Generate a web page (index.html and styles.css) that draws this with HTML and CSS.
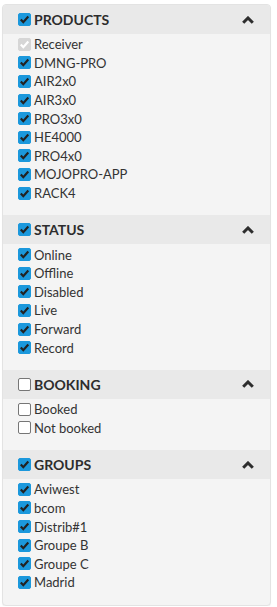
FILE: index.html
```html
<!DOCTYPE html>
<html lang="en">
<head>
    <meta charset="UTF-8">
    <meta name="viewport" content="width=device-width, initial-scale=1.0">
    <title>Filters</title>
    <link rel="stylesheet" href="styles.css">
</head>
<body>
    <div class="filter-panel">

        <div class="filter-section">
            <div class="section-header">
                <span class="box checked"><svg viewBox="0 0 13 13"><path d="M2.8 6.6 L5.3 9.2 L10.3 3.6" /></svg></span>
                <span class="section-title">PRODUCTS</span>
                <svg class="chevron" viewBox="0 0 12 8"><path d="M1.2 6.8 L6 2 L10.8 6.8" /></svg>
            </div>
            <ul class="option-list">
                <li><span class="box disabled"><svg viewBox="0 0 13 13"><path d="M2.8 6.6 L5.3 9.2 L10.3 3.6" /></svg></span>Receiver</li>
                <li><span class="box checked"><svg viewBox="0 0 13 13"><path d="M2.8 6.6 L5.3 9.2 L10.3 3.6" /></svg></span>DMNG-PRO</li>
                <li><span class="box checked"><svg viewBox="0 0 13 13"><path d="M2.8 6.6 L5.3 9.2 L10.3 3.6" /></svg></span>AIR2x0</li>
                <li><span class="box checked"><svg viewBox="0 0 13 13"><path d="M2.8 6.6 L5.3 9.2 L10.3 3.6" /></svg></span>AIR3x0</li>
                <li><span class="box checked"><svg viewBox="0 0 13 13"><path d="M2.8 6.6 L5.3 9.2 L10.3 3.6" /></svg></span>PRO3x0</li>
                <li><span class="box checked"><svg viewBox="0 0 13 13"><path d="M2.8 6.6 L5.3 9.2 L10.3 3.6" /></svg></span>HE4000</li>
                <li><span class="box checked"><svg viewBox="0 0 13 13"><path d="M2.8 6.6 L5.3 9.2 L10.3 3.6" /></svg></span>PRO4x0</li>
                <li><span class="box checked"><svg viewBox="0 0 13 13"><path d="M2.8 6.6 L5.3 9.2 L10.3 3.6" /></svg></span>MOJOPRO-APP</li>
                <li><span class="box checked"><svg viewBox="0 0 13 13"><path d="M2.8 6.6 L5.3 9.2 L10.3 3.6" /></svg></span>RACK4</li>
            </ul>
        </div>

        <div class="filter-section">
            <div class="section-header">
                <span class="box checked"><svg viewBox="0 0 13 13"><path d="M2.8 6.6 L5.3 9.2 L10.3 3.6" /></svg></span>
                <span class="section-title">STATUS</span>
                <svg class="chevron" viewBox="0 0 12 8"><path d="M1.2 6.8 L6 2 L10.8 6.8" /></svg>
            </div>
            <ul class="option-list">
                <li><span class="box checked"><svg viewBox="0 0 13 13"><path d="M2.8 6.6 L5.3 9.2 L10.3 3.6" /></svg></span>Online</li>
                <li><span class="box checked"><svg viewBox="0 0 13 13"><path d="M2.8 6.6 L5.3 9.2 L10.3 3.6" /></svg></span>Offline</li>
                <li><span class="box checked"><svg viewBox="0 0 13 13"><path d="M2.8 6.6 L5.3 9.2 L10.3 3.6" /></svg></span>Disabled</li>
                <li><span class="box checked"><svg viewBox="0 0 13 13"><path d="M2.8 6.6 L5.3 9.2 L10.3 3.6" /></svg></span>Live</li>
                <li><span class="box checked"><svg viewBox="0 0 13 13"><path d="M2.8 6.6 L5.3 9.2 L10.3 3.6" /></svg></span>Forward</li>
                <li><span class="box checked"><svg viewBox="0 0 13 13"><path d="M2.8 6.6 L5.3 9.2 L10.3 3.6" /></svg></span>Record</li>
            </ul>
        </div>

        <div class="filter-section">
            <div class="section-header">
                <span class="box"></span>
                <span class="section-title">BOOKING</span>
                <svg class="chevron" viewBox="0 0 12 8"><path d="M1.2 6.8 L6 2 L10.8 6.8" /></svg>
            </div>
            <ul class="option-list">
                <li><span class="box"></span>Booked</li>
                <li><span class="box"></span>Not booked</li>
            </ul>
        </div>

        <div class="filter-section">
            <div class="section-header">
                <span class="box checked"><svg viewBox="0 0 13 13"><path d="M2.8 6.6 L5.3 9.2 L10.3 3.6" /></svg></span>
                <span class="section-title">GROUPS</span>
                <svg class="chevron" viewBox="0 0 12 8"><path d="M1.2 6.8 L6 2 L10.8 6.8" /></svg>
            </div>
            <ul class="option-list">
                <li><span class="box checked"><svg viewBox="0 0 13 13"><path d="M2.8 6.6 L5.3 9.2 L10.3 3.6" /></svg></span>Aviwest</li>
                <li><span class="box checked"><svg viewBox="0 0 13 13"><path d="M2.8 6.6 L5.3 9.2 L10.3 3.6" /></svg></span>bcom</li>
                <li><span class="box checked"><svg viewBox="0 0 13 13"><path d="M2.8 6.6 L5.3 9.2 L10.3 3.6" /></svg></span>Distrib#1</li>
                <li><span class="box checked"><svg viewBox="0 0 13 13"><path d="M2.8 6.6 L5.3 9.2 L10.3 3.6" /></svg></span>Groupe B</li>
                <li><span class="box checked"><svg viewBox="0 0 13 13"><path d="M2.8 6.6 L5.3 9.2 L10.3 3.6" /></svg></span>Groupe C</li>
                <li><span class="box checked"><svg viewBox="0 0 13 13"><path d="M2.8 6.6 L5.3 9.2 L10.3 3.6" /></svg></span>Madrid</li>
            </ul>
        </div>

    </div>
</body>
</html>
```

FILE: styles.css
```css
html, body {
    margin: 0;
    background-color: #ffffff;
    font-family: Lato, "Liberation Sans", sans-serif;
    color: #333333;
}

.filter-panel {
    margin: 4px 6px 0 2px;
    background-color: #f4f4f4;
    border: 1px solid #e3e3e3;
    border-radius: 4px;
    box-shadow: 0 1px 1px rgba(0, 0, 0, 0.06);
    overflow: hidden;
}

.filter-section {
    padding-bottom: 13px;
}

.section-header {
    display: flex;
    align-items: center;
    height: 29px;
    padding: 0 15px 0 15px;
    background-color: #e9e9e9;
}

.section-title {
    flex-grow: 1;
    font-size: 14px;
    font-weight: bold;
    color: #2d2d2d;
}

.chevron {
    width: 12px;
    height: 8px;
    fill: none;
    stroke: #2d2d2d;
    stroke-width: 3;
    stroke-linecap: butt;
    margin-right: 1px;
}

.option-list {
    list-style: none;
    margin: 0;
    padding: 1px 0 0 15px;
}

.option-list li {
    display: flex;
    align-items: center;
    height: 18.6px;
    font-size: 13px;
}

.box {
    flex-shrink: 0;
    display: inline-flex;
    width: 13px;
    height: 13px;
    margin-right: 3px;
    box-sizing: border-box;
    border: 1px solid #767676;
    border-radius: 2px;
    background-color: #ffffff;
}

.box svg {
    width: 13px;
    height: 13px;
    margin: -1px;
    fill: none;
    stroke: #222222;
    stroke-width: 2.2;
}

.box.checked {
    border-color: #1b98dc;
    background-color: #1b98dc;
}

.box.disabled {
    border-color: #d6d6d6;
    background-color: #d6d6d6;
}

.box.disabled svg {
    stroke: #ffffff;
}
```
